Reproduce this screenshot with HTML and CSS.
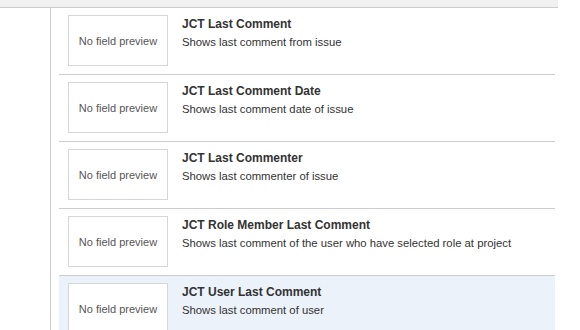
FILE: index.html
```html
<!DOCTYPE html>
<html lang="en">

<head>
    <meta charset="UTF-8">
    <meta name="viewport" content="width=device-width, initial-scale=1.0">
    <title>Field types</title>
    <link rel="stylesheet" href="styles.css">
</head>

<body>
    <div class="topbar"></div>
    <div class="layout">
        <div class="sidebar"></div>
        <ul class="fields">
            <li class="field">
                <div class="preview">No field preview</div>
                <div class="info">
                    <p class="title">JCT Last Comment</p>
                    <p class="desc">Shows last comment from issue</p>
                </div>
            </li>
            <li class="field">
                <div class="preview">No field preview</div>
                <div class="info">
                    <p class="title">JCT Last Comment Date</p>
                    <p class="desc">Shows last comment date of issue</p>
                </div>
            </li>
            <li class="field">
                <div class="preview">No field preview</div>
                <div class="info">
                    <p class="title">JCT Last Commenter</p>
                    <p class="desc">Shows last commenter of issue</p>
                </div>
            </li>
            <li class="field">
                <div class="preview">No field preview</div>
                <div class="info">
                    <p class="title">JCT Role Member Last Comment</p>
                    <p class="desc">Shows last comment of the user who have selected role at project</p>
                </div>
            </li>
            <li class="field selected">
                <div class="preview">No field preview</div>
                <div class="info">
                    <p class="title">JCT User Last Comment</p>
                    <p class="desc">Shows last comment of user</p>
                </div>
            </li>
        </ul>
    </div>
</body>

</html>
```

FILE: styles.css
```css
/*
    基本样式
*/
body,
div,
ul,
li,
p {
    margin: 0px;
    padding: 0px;
}

ul,
li {
    list-style: none;
}

body {
    font-family: "Liberation Sans", Arial, sans-serif;
    color: #333;
    background-color: #fff;
}

/*
    顶部条
*/
.topbar {
    width: 558px;
    height: 7px;
    background-color: #f0f0f0;
    border-bottom: 1px solid #ccc;
}

.layout {
    display: flex;
    height: 322px;
}

.sidebar {
    width: 50px;
    border-right: 1px solid #ccc;
}

/*
    字段列表
*/
.fields {
    width: 496px;
    margin-left: 8px;
}

.field {
    display: flex;
    padding: 7px 0 8px 9px;
    border-bottom: 1px solid #ccc;
}

.field.selected {
    background-color: #ebf2f9;
}

.preview {
    display: flex;
    align-items: center;
    justify-content: center;
    flex-shrink: 0;
    box-sizing: border-box;
    width: 100px;
    height: 51px;
    border: 1px solid #d6d6d6;
    background-color: #fff;
    font-size: 11px;
    color: #555;
}

.info {
    margin-left: 14px;
}

.title {
    font-size: 12px;
    line-height: 18px;
    font-weight: bold;
    color: #333;
}

.desc {
    margin-top: 1px;
    font-size: 11.3px;
    line-height: 16px;
    color: #333;
}
```
